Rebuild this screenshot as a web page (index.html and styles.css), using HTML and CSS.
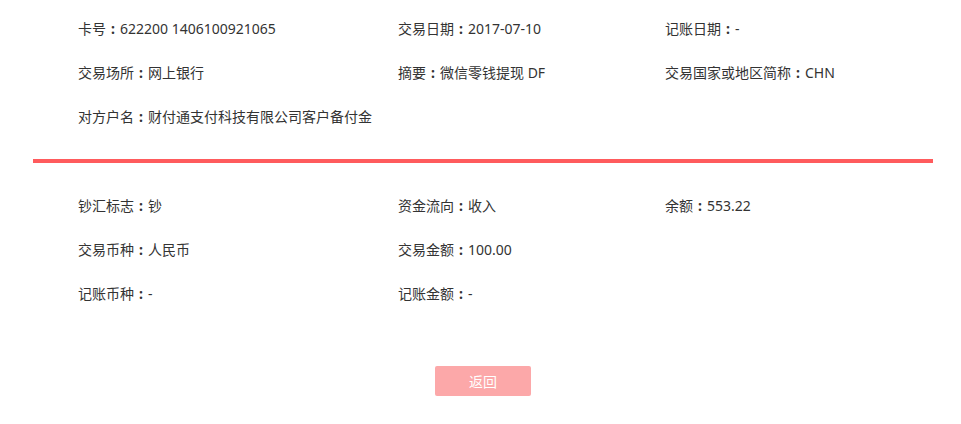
FILE: index.html
```html
<!DOCTYPE html>
<html lang="zh-CN">
<head>
    <meta charset="UTF-8">
    <title>交易明细</title>
    <link rel="stylesheet" href="styles.css">
</head>
<body>
    <div class="detail">
        <!-- 交易基本信息 -->
        <div class="info-grid top">
            <div class="info-item"><span class="label">卡号</span>622200 1406100921065</div>
            <div class="info-item"><span class="label">交易日期</span>2017-07-10</div>
            <div class="info-item"><span class="label">记账日期</span>-</div>
            <div class="info-item"><span class="label">交易场所</span>网上银行</div>
            <div class="info-item"><span class="label">摘要</span>微信零钱提现 DF</div>
            <div class="info-item"><span class="label">交易国家或地区简称</span>CHN</div>
            <div class="info-item"><span class="label">对方户名</span>财付通支付科技有限公司客户备付金</div>
        </div>

        <div class="divider"></div>

        <!-- 金额信息 -->
        <div class="info-grid bottom">
            <div class="info-item"><span class="label">钞汇标志</span>钞</div>
            <div class="info-item"><span class="label">资金流向</span>收入</div>
            <div class="info-item"><span class="label">余额</span>553.22</div>
            <div class="info-item"><span class="label">交易币种</span>人民币</div>
            <div class="info-item"><span class="label">交易金额</span>100.00</div>
            <div class="info-item"></div>
            <div class="info-item"><span class="label">记账币种</span>-</div>
            <div class="info-item"><span class="label">记账金额</span>-</div>
        </div>

        <div class="actions">
            <button class="btn-back" type="button">返回</button>
        </div>
    </div>
</body>
</html>
```

FILE: styles.css
```css
body {
    margin: 0;
    font-family: "Noto Sans", "Noto Sans CJK SC", sans-serif;
    font-size: 14px;
    color: #333;
    background-color: #fff;
}

.detail {
    width: 900px;
    margin: 0 0 0 33px;
}

/* 信息三栏 */
.info-grid {
    display: grid;
    grid-template-columns: 320px 267px 1fr;
    padding-left: 45px;
}

.info-grid.top {
    padding-top: 7px;
    padding-bottom: 20px;
}

.info-grid.bottom {
    padding-top: 21px;
}

.info-item {
    height: 44px;
    line-height: 44px;
    white-space: nowrap;
}

/* 冒号居中显示，占一个汉字宽 */
.label::after {
    content: ":";
    display: inline-block;
    width: 14px;
    text-align: center;
    font-weight: bold;
}

.divider {
    height: 4px;
    background-color: #ff5b5d;
}

.actions {
    display: flex;
    justify-content: center;
    padding-top: 50px;
}

.btn-back {
    width: 96px;
    height: 30px;
    border: none;
    border-radius: 2px;
    background-color: #fca8a9;
    color: #fff;
    font-family: "Noto Sans CJK SC", sans-serif;
    font-size: 14px;
    cursor: pointer;
}
```
